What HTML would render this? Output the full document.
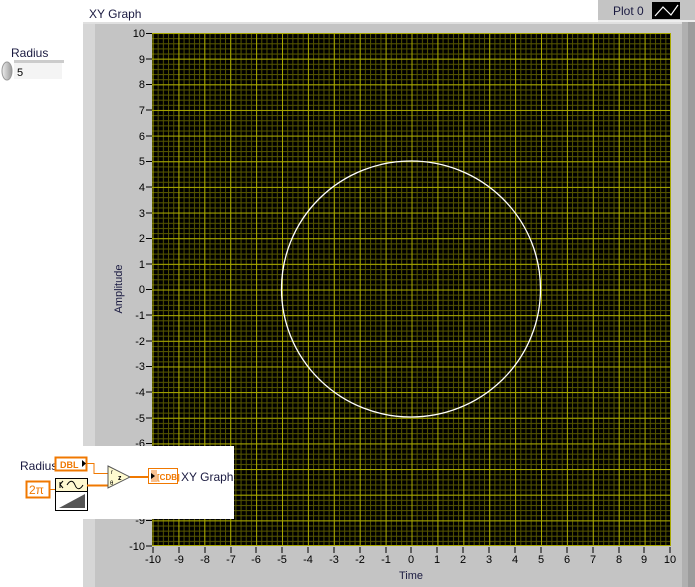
<!DOCTYPE html>
<html><head><meta charset="utf-8"><style>
html,body{margin:0;padding:0;background:#fff;width:695px;height:587px;overflow:hidden;font-family:"Liberation Sans",sans-serif}
svg{display:block}
</style></head><body>
<svg width="695" height="587" xmlns="http://www.w3.org/2000/svg" font-family="Liberation Sans, sans-serif">
<defs>
<pattern id="minor" patternUnits="userSpaceOnUse" x="152.5" y="33" width="5.18" height="5.13">
<path d="M0.5 0V5.13M0 0.5H5.18" stroke="#555500" stroke-width="1"/>
</pattern>
<pattern id="major" patternUnits="userSpaceOnUse" x="152.5" y="33" width="25.9" height="25.65">
<path d="M0.5 0V25.65M0 0.5H25.9" stroke="#a8a800" stroke-width="1"/>
</pattern>
<linearGradient id="ud" x1="0" x2="1"><stop offset="0" stop-color="#eee"/><stop offset="1" stop-color="#999"/></linearGradient>
</defs>
<rect x="83" y="22" width="612" height="565" fill="#c4c4c4"/>
<rect x="83" y="22" width="12" height="565" fill="#d6d6d6"/>
<rect x="83" y="22" width="612" height="2" fill="#e0e0e0"/>
<rect x="682" y="22" width="13" height="565" fill="#b0b0b0"/>
<rect x="688" y="22" width="7" height="565" fill="#9c9c9c"/>
<text x="89" y="18" font-size="12" fill="#1a1a40">XY Graph</text>
<rect x="598" y="0" width="97" height="21" fill="#c4c4c4"/>
<rect x="598" y="20" width="97" height="2" fill="#eee"/>
<text x="613" y="15" font-size="12" fill="#1a1a40">Plot 0</text>
<rect x="652" y="2" width="28" height="17" fill="#000"/>
<path d="M655 16L663 7L671 15L678 5" stroke="#fff" fill="none" stroke-width="1.2"/>
<rect x="152" y="33" width="519" height="513" fill="#000"/>
<rect x="152" y="33" width="519" height="513" fill="url(#minor)"/>
<rect x="152" y="33" width="519" height="513" fill="url(#major)"/>
<line x1="670.5" y1="33" x2="670.5" y2="546" stroke="#a8a800"/>
<line x1="152" y1="545.5" x2="671" y2="545.5" stroke="#a8a800"/>
<ellipse cx="411" cy="289" rx="129.5" ry="128" fill="none" stroke="#fff" stroke-width="1.3"/>
<g font-size="11" fill="#000" text-anchor="end">
<text x="145" y="37">10</text><text x="145" y="63">9</text><text x="145" y="88">8</text><text x="145" y="114">7</text><text x="145" y="140">6</text><text x="145" y="165">5</text><text x="145" y="191">4</text><text x="145" y="217">3</text><text x="145" y="242">2</text><text x="145" y="268">1</text><text x="145" y="293">0</text><text x="145" y="319">-1</text><text x="145" y="345">-2</text><text x="145" y="370">-3</text><text x="145" y="396">-4</text><text x="145" y="422">-5</text><text x="145" y="447">-6</text><text x="145" y="473">-7</text><text x="145" y="498">-8</text><text x="145" y="524">-9</text><text x="145" y="550">-10</text>
</g>
<path d="M146 33.5h6M146 59h6M146 84.5h6M146 110h6M146 136h6M146 161.5h6M146 187h6M146 213h6M146 238.5h6M146 264h6M146 289.5h6M146 315h6M146 341h6M146 366.5h6M146 392h6M146 418h6M146 443.5h6M146 469h6M146 495h6M146 520.5h6M146 546h6" stroke="#000"/>
<text transform="translate(122,289) rotate(-90)" font-size="11" text-anchor="middle" fill="#1a1a40">Amplitude</text>
<g font-size="11" fill="#000" text-anchor="middle">
<text x="153" y="563">-10</text><text x="179" y="563">-9</text><text x="205" y="563">-8</text><text x="231" y="563">-7</text><text x="256" y="563">-6</text><text x="282" y="563">-5</text><text x="308" y="563">-4</text><text x="334" y="563">-3</text><text x="360" y="563">-2</text><text x="386" y="563">-1</text><text x="411" y="563">0</text><text x="437" y="563">1</text><text x="463" y="563">2</text><text x="489" y="563">3</text><text x="515" y="563">4</text><text x="541" y="563">5</text><text x="567" y="563">6</text><text x="593" y="563">7</text><text x="619" y="563">8</text><text x="644" y="563">9</text><text x="670" y="563">10</text>
</g>
<path d="M153 547v6M179 547v6M205 547v6M231 547v6M256 547v6M282 547v6M308 547v6M334 547v6M360 547v6M386 547v6M411 547v6M437 547v6M463 547v6M489 547v6M515 547v6M541 547v6M567 547v6M593 547v6M619 547v6M644 547v6M670 547v6" stroke="#000"/>
<text x="411" y="579" font-size="11" text-anchor="middle" fill="#1a1a40">Time</text>
<text x="11" y="57" font-size="12" fill="#1a1a40">Radius</text>
<rect x="14" y="60" width="50" height="3" fill="#ccc"/>
<rect x="14" y="63" width="48" height="16" fill="#f4f4f4"/>
<ellipse cx="7" cy="71" rx="5" ry="9" fill="url(#ud)" stroke="#999"/>
<text x="17" y="76" font-size="11" fill="#000">5</text>
<rect x="0" y="446" width="234" height="73" fill="#fff"/>
<text x="20" y="470" font-size="12" fill="#1a1a40">Radius</text>
<rect x="55.5" y="457.5" width="31" height="13" fill="#fff" stroke="#f07800" stroke-width="2"/>
<text x="60" y="468" font-size="9" font-weight="bold" fill="#f07800">DBL</text>
<path d="M82 460l4 3.5-4 3.5z" fill="#000"/>
<path d="M87 463.5h7v10h15" stroke="#f07800" fill="none" stroke-width="1"/>
<rect x="26.5" y="481.5" width="23" height="16" fill="#fff" stroke="#f07800" stroke-width="2"/>
<text x="29" y="494" font-size="12" fill="#f07800">2π</text>
<path d="M50 489.5h5" stroke="#f07800" stroke-width="1"/>
<rect x="55.5" y="478.5" width="32" height="32" fill="#fff" stroke="#000"/>
<rect x="56" y="479" width="31" height="12" fill="#fff8d0"/>
<line x1="55.5" y1="491.5" x2="87.5" y2="491.5" stroke="#000"/>
<path d="M60 482v6M63 481l-3 3.5 3 3.5" stroke="#000" fill="none"/>
<path d="M67 485c3-5 6-5 8 0s5 5 8 0" stroke="#000" fill="none"/>
<path d="M59 508L85 494V508z" fill="#555"/>
<path d="M87 485.5h21" stroke="#f07800" stroke-width="2"/>
<path d="M108 466L130 477L108 488z" fill="#fffbd0" stroke="#555"/>
<text x="111" y="474" font-size="6" fill="#000">r</text><text x="110" y="485" font-size="6" fill="#000">θ</text><text x="118" y="480" font-size="7" font-weight="bold" fill="#000">z</text>
<path d="M130 477h18" stroke="#f07800" stroke-width="2"/>
<rect x="148.5" y="468.5" width="29" height="15" fill="#fff" stroke="#f07800"/>
<rect x="151" y="470" width="6" height="12" fill="#f8c090"/>
<path d="M151 473l4 3-4 3z" fill="#000"/>
<text x="157" y="480" font-size="8" font-weight="bold" fill="#f07800">[CDB]</text>
<text x="181" y="481" font-size="12" fill="#1a1a40">XY Graph</text>
</svg>
</body></html>
